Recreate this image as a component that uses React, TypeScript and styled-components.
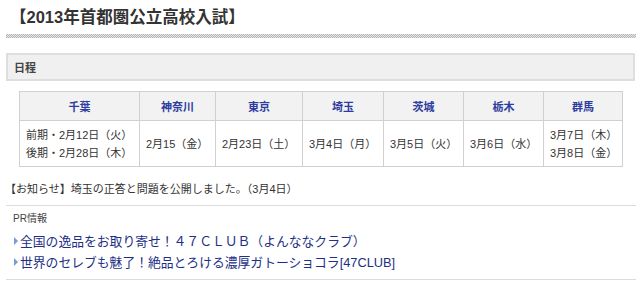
import React from "react";
import styled, { createGlobalStyle } from "styled-components";

const Global = createGlobalStyle`
  html, body { margin: 0; padding: 0; background: #fff; }
  body { font-family: "Liberation Sans", "Noto Sans CJK JP", sans-serif; color: #333; }
`;

const Page = styled.div`
  width: 640px;
  padding: 8px 4px 0 6px;
  box-sizing: border-box;
`;

const Title = styled.h2`
  margin: 0;
  padding-left: 4px;
  font-size: 16.5px;
  line-height: 18px;
  font-weight: bold;
  color: #333;
`;

const Stripe = styled.div`
  height: 4px;
  margin-top: 8px;
  background-image: conic-gradient(#b5b5b5 25%, #e6e6e6 0 50%, #b5b5b5 0 75%, #e6e6e6 0);
  background-size: 2px 2px;
`;

const SectionBox = styled.div`
  margin-top: 15px;
  margin-right: 1px;
  height: 28px;
  box-sizing: border-box;
  border: 2px solid #dedede;
  background: #f0f0f0;
  display: flex;
  align-items: center;
  padding-left: 6px;
  font-size: 11px;
  font-weight: bold;
  color: #444;
`;

const Table = styled.table`
  margin: 10px 0 0 13px;
  border-collapse: collapse;
  width: 603px;
  table-layout: fixed;
`;

const Th = styled.th`
  border: 1px solid #d0d0d0;
  background: #f2f2f2;
  height: 28px;
  padding: 0;
  font-size: 11px;
  font-weight: bold;
  color: #2d3c9e;
  text-align: center;
`;

const Td = styled.td`
  border: 1px solid #d0d0d0;
  height: 45px;
  padding: 0 0 0 6px;
  font-size: 11px;
  line-height: 18px;
  color: #333;
  white-space: nowrap;
`;

const Notice = styled.p`
  margin: 14px 0 0 -1px;
  font-size: 11px;
  line-height: 16px;
  color: #333;
`;

const Rule = styled.hr`
  margin: 8px 0 0 0;
  border: none;
  border-top: 1px solid #dcdcdc;
  height: 0;
`;

const PrLabel = styled.div`
  margin-top: 6px;
  padding-left: 7px;
  font-size: 10px;
  line-height: 14px;
  color: #444;
`;

const LinkList = styled.ul`
  list-style: none;
  margin: 4px 0 0 0;
  padding: 0 0 0 8px;
`;

const LinkItem = styled.li`
  display: flex;
  align-items: center;
  height: 21px;
`;

const Marker = styled.span`
  width: 0;
  height: 0;
  border-top: 4px solid transparent;
  border-bottom: 4px solid transparent;
  border-left: 4px solid #7a9bd8;
  margin-right: 2px;
`;

const Link = styled.a`
  font-size: 12.8px;
  color: #1d2f86;
  text-decoration: none;
  white-space: nowrap;
`;

const BottomRule = styled.hr`
  margin: 7px 0 0 0;
  border: none;
  border-top: 1px solid #dcdcdc;
  height: 0;
`;

const widths = [120, 76, 87, 81, 80, 80, 79];
const prefs = ["千葉", "神奈川", "東京", "埼玉", "茨城", "栃木", "群馬"];
const dates: string[][] = [
  ["前期・2月12日（火）", "後期・2月28日（木）"],
  ["2月15（金）"],
  ["2月23日（土）"],
  ["3月4日（月）"],
  ["3月5日（火）"],
  ["3月6日（水）"],
  ["3月7日（木）", "3月8日（金）"],
];

export default function App() {
  return (
    <>
      <Global />
      <Page>
        <Title>【2013年首都圏公立高校入試】</Title>
        <Stripe />
        <SectionBox>日程</SectionBox>
        <Table>
          <colgroup>
            {widths.map((w, i) => (
              <col key={i} style={{ width: w }} />
            ))}
          </colgroup>
          <thead>
            <tr>
              {prefs.map((p) => (
                <Th key={p}>{p}</Th>
              ))}
            </tr>
          </thead>
          <tbody>
            <tr>
              {dates.map((d, i) => (
                <Td key={i}>
                  {d.map((line, j) => (
                    <div key={j}>{line}</div>
                  ))}
                </Td>
              ))}
            </tr>
          </tbody>
        </Table>
        <Notice>【お知らせ】埼玉の正答と問題を公開しました。（3月4日）</Notice>
        <Rule />
        <PrLabel>PR情報</PrLabel>
        <LinkList>
          <LinkItem>
            <Marker />
            <Link href="#">全国の逸品をお取り寄せ！４７ＣＬＵＢ（よんななクラブ）</Link>
          </LinkItem>
          <LinkItem>
            <Marker />
            <Link href="#">世界のセレブも魅了！絶品とろける濃厚ガトーショコラ[47CLUB]</Link>
          </LinkItem>
        </LinkList>
        <BottomRule />
      </Page>
    </>
  );
}
